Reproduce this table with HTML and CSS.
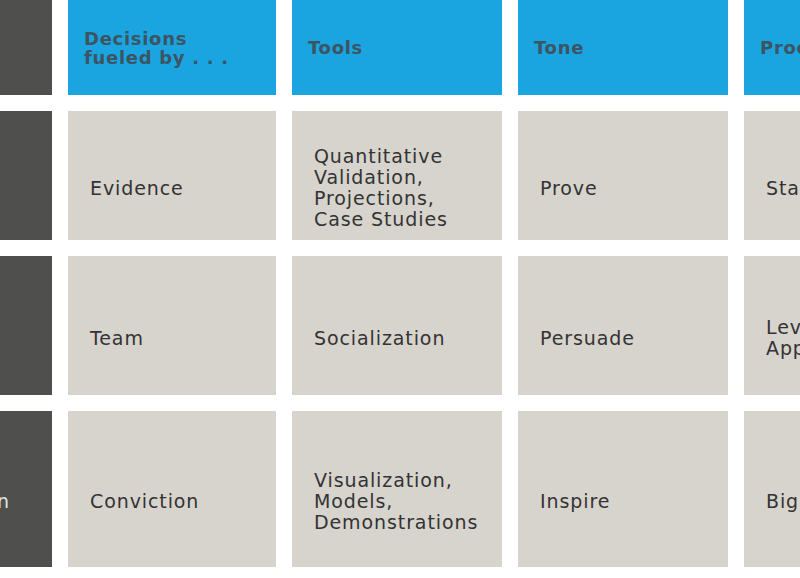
FILE: index.html
```html
<!DOCTYPE html>
<html>
<head>
<meta charset="utf-8">
<link rel="stylesheet" href="styles.css">
</head>
<body>
<div class="viewport">
  <div class="grid">
    <div class="cell side"></div>
    <div class="cell head">Decisions<br>fueled by . . .</div>
    <div class="cell head">Tools</div>
    <div class="cell head">Tone</div>
    <div class="cell head">Process</div>

    <div class="cell side"><span>Established</span></div>
    <div class="cell body">Evidence</div>
    <div class="cell body">Quantitative<br>Validation,<br>Projections,<br>Case Studies</div>
    <div class="cell body">Prove</div>
    <div class="cell body">Standard</div>

    <div class="cell side"><span>Emerging</span></div>
    <div class="cell body">Team</div>
    <div class="cell body">Socialization</div>
    <div class="cell body">Persuade</div>
    <div class="cell body">Leverage<br>Approach</div>

    <div class="cell side"><span>Transformation</span></div>
    <div class="cell body">Conviction</div>
    <div class="cell body">Visualization,<br>Models,<br>Demonstrations</div>
    <div class="cell body">Inspire</div>
    <div class="cell body">Big Ideas</div>
  </div>
</div>
</body>
</html>
```

FILE: styles.css
```css
html, body {
  margin: 0;
  padding: 0;
  background: #ffffff;
  overflow: hidden;
}

.viewport {
  width: 800px;
  height: 578px;
  overflow: hidden;
}

.grid {
  display: grid;
  grid-template-columns: 218px 208px 210px 210px 210px;
  grid-template-rows: 95px 129px 139px 156px;
  column-gap: 16px;
  row-gap: 16px;
  margin-left: -166px;
  width: 1140px;
}

.cell {
  display: flex;
  align-items: center;
  box-sizing: border-box;
  white-space: nowrap;
}

.side {
  background: #4f4f4d;
  color: #e2e2e0;
  font-family: "DejaVu Sans", sans-serif;
  font-size: 19px;
  letter-spacing: 0.8px;
  padding: 24px 0 0 22px;
}

.head {
  background: #1aa5e1;
  color: #3d5462;
  font-family: "DejaVu Sans", sans-serif;
  font-weight: bold;
  font-size: 18px;
  line-height: 19px;
  letter-spacing: 0.7px;
  padding-left: 16px;
}

.body {
  background: #d7d4cd;
  color: #333333;
  font-family: "DejaVu Sans", sans-serif;
  font-size: 19px;
  line-height: 21px;
  letter-spacing: 0.9px;
  padding: 25px 0 0 22px;
}
```
